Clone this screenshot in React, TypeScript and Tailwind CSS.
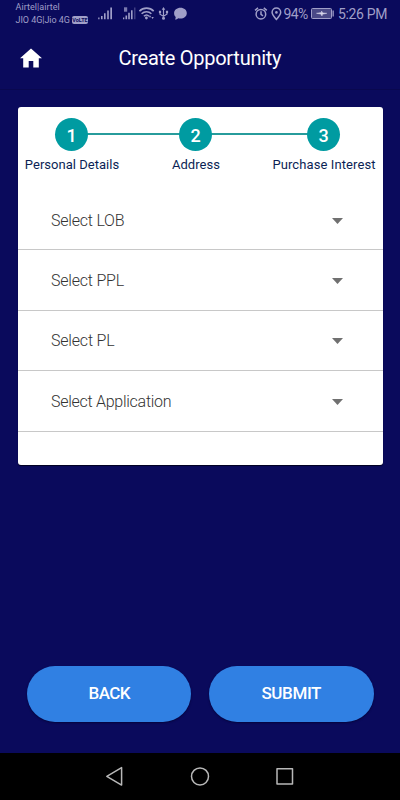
import { useState } from "react";

const steps = [
  { number: 1, label: "Personal Details", pos: "w-[108px]", text: "tracking-[0.02px]" },
  { number: 2, label: "Address", pos: "w-[140px]", text: "tracking-[0.05px]" },
  { number: 3, label: "Purchase Interest", pos: "w-[116px]", text: "tracking-[0.1px]" },
];

const fields = [
  { label: "Select LOB", text: "tracking-[-0.22px]" },
  { label: "Select PPL", text: "tracking-[-0.22px]" },
  { label: "Select PL", text: "tracking-[-0.2px]" },
  { label: "Select Application", text: "tracking-[-0.27px]" },
];

function StatusBar() {
  return (
    <div className="flex h-7 w-full text-[#a09fc8]">
      <div className="w-[74px] shrink-0 pl-[15.5px] pt-[1px] text-[9px] leading-[12.5px] whitespace-nowrap">
        <div className="tracking-[0.05px]">Airtel|airtel</div>
        <div className="flex items-center">
          <span className="tracking-[-0.04px]">JIO 4G|Jio 4G</span>
          <span className="ml-[2px] h-[8px] w-[16px] shrink-0 rounded-[2px] bg-[#a09fc8] text-center text-[5.5px] font-bold leading-[8px] text-[#0a0a5c]">
            VoLTE
          </span>
        </div>
      </div>

      {/* SIGNAL, WIFI, USB, MESSAGE */}
      <svg viewBox="74 0 126 28" className="h-7 w-[126px] shrink-0" fill="currentColor">
        <path d="M98.2 17.6h1.3v1.7h-1.3zM101 16h1.6v3.3H101zM104 13.3h1.6v6H104zM107.2 10.5h1.6v8.8h-1.6zM110.3 7.5h1.7v11.8h-1.7z" />
        <path d="M123 17.5h1.3v1.8H123zM125.5 15.5h1.6v3.8h-1.6zM128.2 12.8h1.6v6.5h-1.6zM131 10.2h1.6v9.1H131z" />
        <path d="M134 7.5h1.5v11.8H134z" opacity="0.35" />
        <path d="M124 7.3h3.2v4.4H124z" opacity="0.75" />
        <g fill="none" stroke="currentColor" strokeWidth="1.6">
          <path d="M139.4 11.1c4-4 10.4-4 14.3 0M141.6 13.8c2.8-2.8 7-2.8 9.8 0M143.9 16.3c1.5-1.5 3.7-1.5 5.2 0" />
        </g>
        <circle cx="146.4" cy="18" r="1.4" />
        <path d="M150 15.3l1.2 2h-2.4zM152.6 19l-1.2-2h2.4z" />
        <g fill="none" stroke="currentColor" strokeWidth="1.2">
          <path d="M163.5 9v9M160 12v2.2l3.5 2.2 3.5-2.4v-2.2" />
        </g>
        <path d="M163.5 7l1.8 2.7h-3.6zM158.9 10.8h2.2v2.2h-2.2zM165.9 10.7h2.2v2.2h-2.2z" />
        <circle cx="163.5" cy="18.3" r="1.5" />
        <path d="M180.5 7.8c3.6 0 6.3 2.3 6.3 5.4 0 3.1-2.8 5.4-6.3 5.4-.8 0-1.5-.1-2.2-.3-.8.8-2 1.2-3.3 1.3.5-.8.8-1.6.7-2.6-1-.9-1.6-2.2-1.6-3.8 0-3.1 2.8-5.4 6.4-5.4z" />
      </svg>

      {/* ALARM, LOCATION */}
      <svg viewBox="200 0 83 28" className="h-7 w-[83px] shrink-0" fill="none" stroke="currentColor" strokeWidth="1.5">
        <circle cx="260.9" cy="14.2" r="4.8" />
        <path d="M261 11.2v3.2l2 1.4M255 10.4l3-2.5M266.8 10.4l-3-2.5" />
        <path d="M276.4 19.4c-2.7-3-4.3-4.9-4.3-7.2a4.3 4.3 0 0 1 8.6 0c0 2.3-1.6 4.2-4.3 7.2z" />
        <circle cx="276.4" cy="12.4" r="1.3" fill="currentColor" stroke="none" />
      </svg>

      <span className="w-[27px] shrink-0 pl-[0.5px] text-[14px] leading-7 tracking-[-0.6px] whitespace-nowrap">94%</span>

      {/* BATTERY */}
      <svg viewBox="310 0 27 28" className="h-7 w-[27px] shrink-0">
        <rect x="311.5" y="8.5" width="20" height="10" rx="1" fill="#4a4987" stroke="currentColor" />
        <path d="M332.5 10.5h1.3v6h-1.3z" fill="currentColor" />
        <path d="M316.5 13.3l5-.7v-1.6l1.3 1.9 4 .4-4.4.9-.4 1.8-1.2-2z" fill="#d8d7ea" stroke="#d8d7ea" strokeWidth="0.5" />
      </svg>

      <span className="pl-[1px] text-[14px] leading-7 tracking-[-0.36px] whitespace-nowrap">5:26 PM</span>
    </div>
  );
}

export default function App() {
  const [selected, setSelected] = useState(-1);

  return (
    <div className="flex h-[800px] w-[400px] flex-col overflow-hidden bg-[#0a0a5c] font-[Roboto,sans-serif]">
      <StatusBar />

      {/* HEADER */}
      <header className="flex h-[62px] shrink-0 items-center border-b border-[#09084f] pb-[2px] text-white">
        <svg viewBox="0 0 22 20" className="ml-5 h-5 w-[22px]" fill="currentColor">
          <path d="M11 .5L0 10.3h3.2v9.2h5.5v-6.4h4.6v6.4h5.5v-9.2H22z" />
        </svg>
        <h1 className="ml-[76.5px] text-[20px] leading-6 tracking-[-0.27px] whitespace-nowrap">Create Opportunity</h1>
      </header>

      {/* FORM CARD */}
      <main className="mx-[17.5px] mt-[16.5px] h-[358.5px] shrink-0 rounded-[3px] bg-white shadow-[0_1px_1px_#000020]">
        <div className="relative h-[83.5px] pt-[11.5px]">
          <div className="absolute left-[54px] top-[26px] h-[2px] w-[252px] bg-[#279c9c]" />
          <div className="relative flex">
            {steps.map((step) => (
              <div key={step.number} className={`flex shrink-0 flex-col items-center ${step.pos}`}>
                <div className="flex h-[33px] w-[33px] items-center justify-center rounded-full bg-[#009ba1] pt-[1px] text-[18px] font-medium text-white">
                  {step.number}
                </div>
                <span className={`mt-[6px] pl-[1px] text-[13px] leading-4 whitespace-nowrap text-[#0b1f55] ${step.text}`}>
                  {step.label}
                </span>
              </div>
            ))}
          </div>
        </div>

        {fields.map((field, index) => (
          <div
            key={field.label}
            onClick={() => setSelected(index)}
            aria-selected={selected === index}
            className="flex h-[60.4px] cursor-pointer items-center justify-between border-b border-[#c8c8c8] pt-[2px] pr-[39.5px] pl-[33.5px]"
          >
            <span className={`text-[16px] font-light text-[#333333] ${field.text}`}>{field.label}</span>
            <svg viewBox="0 0 11 6" className="h-[6px] w-[11px]" fill="#707070">
              <path d="M0 0h11L5.5 6z" />
            </svg>
          </div>
        ))}
      </main>

      {/* ACTIONS */}
      <div className="mt-auto mb-[31.5px] flex shrink-0 gap-[18px] pl-[26.5px]">
        <button className="h-[55.5px] w-[164.5px] rounded-full bg-[#3080e3] pl-[1px] text-[17px] font-medium text-white shadow-[0_1px_2px_#05053c]">
          <span className="tracking-[-0.6px]">BACK</span>
        </button>
        <button className="h-[55.5px] w-[164.5px] rounded-full bg-[#3080e3] text-[17px] font-medium text-white shadow-[0_1px_2px_#05053c]">
          <span className="tracking-[-0.4px]">SUBMIT</span>
        </button>
      </div>

      {/* NAVIGATION */}
      <nav className="h-[47px] w-full shrink-0 bg-black">
        <svg viewBox="0 753 400 47" className="h-[47px] w-full" fill="none" stroke="#b8b8b8" strokeWidth="1.5" strokeLinejoin="round">
          <path d="M106.8 776.3l14.8-8.7v17.5z" />
          <circle cx="200" cy="776.4" r="8.5" />
          <rect x="277" y="768.8" width="15.5" height="15.3" />
        </svg>
      </nav>
    </div>
  );
}
